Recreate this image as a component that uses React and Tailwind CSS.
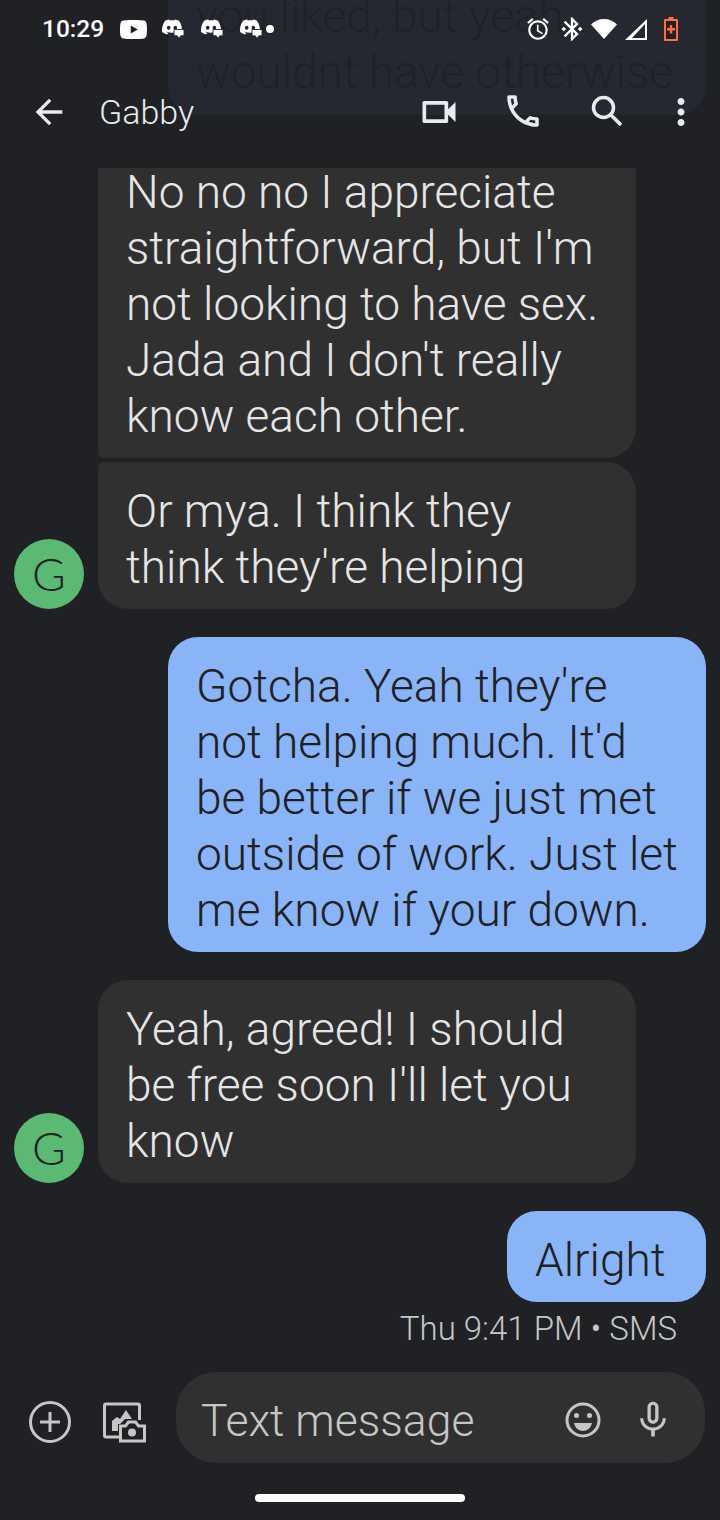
import { MdArrowBack, MdMoreVert, MdOutlineCall, MdOutlineVideocam, MdAlarm, MdBluetoothConnected, MdMicNone } from 'react-icons/md';
import { SiDiscord, SiYoutube } from 'react-icons/si';

const FONT = 'font-["Roboto",sans-serif]';

const DiscordBubble = () => (
    <div className="relative w-[24px] h-[20px]">
        <SiDiscord className="absolute left-[-1px] top-[-2px] w-[24px] h-[20px] text-white" />
        <svg viewBox="0 0 12 11" className="absolute left-[12px] top-[10px] w-[12px] h-[10px]">
            <path d="M0.5 0.5h11v7h-3.500l-2 3l-2-3h-3.500z" fill="#fff" stroke="#202124" strokeWidth="1" />
        </svg>
    </div>
);

const StatusBar = () => (
    <div className="relative flex items-center h-[58px] pl-[42px] pr-[42px]">
        <span className="text-[24.500px] font-medium text-white w-[78px]">10:29</span>
        <SiYoutube className="w-[27px] h-[27px] text-white mr-[14px]" />
        <div className="flex items-center gap-[15px]">
            <DiscordBubble />
            <DiscordBubble />
            <DiscordBubble />
        </div>
        <div className="w-[8px] h-[8px] rounded-full bg-white ml-[3px]" />
        <div className="flex items-center ml-auto">
            <MdAlarm className="w-[26px] h-[26px] text-white" />
            <MdBluetoothConnected className="ml-[7px] w-[28px] h-[28px] text-white" />
            <svg viewBox="0 0 26 20" className="ml-[5px] w-[26px] h-[20px]">
                <path d="M13 20L0 5.500C3.500 2 8 0 13 0s9.500 2 13 5.500z" fill="#fff" />
            </svg>
            <svg viewBox="0 0 22 22" className="ml-[8px] w-[22px] h-[22px]">
                <path d="M22 1v21H0zM20 6L7 20h13z" fill="#fff" fillRule="evenodd" />
            </svg>
            <svg viewBox="0 0 14 24" className="ml-[17px] w-[14px] h-[24px]">
                <path d="M4.500 0h5v2h3.500a1 1 0 0 1 1 1v20a1 1 0 0 1-1 1H1a1 1 0 0 1-1-1V3a1 1 0 0 1 1-1h3.500z" fill="#ff6e40" />
                <rect x="2" y="4" width="10" height="18" fill="#202124" />
                <path d="M5.800 8h2.400v3H11v2.400H8.200v3H5.800v-3H3V11h2.800z" fill="#ff6e40" />
            </svg>
        </div>
    </div>
);

const Toolbar = () => (
    <div className="relative flex items-center h-[54px] mt-[27px] pl-[29px] text-[#e8eaed]">
        <MdArrowBack className="w-[40px] h-[40px]" />
        <span className="ml-[30px] text-[34px] font-light text-[#e8eaed]">Gabby</span>
        <MdOutlineVideocam className="absolute left-[417px] top-[5px] w-[44px] h-[44px]" />
        <MdOutlineCall className="absolute left-[502px] top-[5px] w-[42px] h-[42px]" />
        <svg viewBox="0 0 36 36" className="absolute left-[589px] top-[9px] w-[36px] h-[36px]" fill="none" stroke="#e8eaed" strokeWidth="3.500">
            <circle cx="14.500" cy="13.500" r="10" />
            <path d="M22 21l10 10" />
        </svg>
        <MdMoreVert className="absolute left-[660px] top-[6px] w-[42px] h-[42px]" />
    </div>
);

const Avatar = () => (
    <div className='w-[70px] h-[70px] shrink-0 rounded-full bg-[#5bb974] flex items-center justify-center font-["Lato",sans-serif] text-[46px] font-light leading-none text-[#202124]'>
        G
    </div>
);

const Incoming = ({ lines, showAvatar, tight, clipped }) => (
    <div className="flex items-end shrink-0">
        <div className="w-[98px] pl-[14px] shrink-0">{showAvatar && <Avatar />}</div>
        <div className={`w-[538px] bg-[#303030] text-[#e5e5e5] pl-[28px] pb-[14px] pt-[21px] text-[46px] leading-[56px] font-[350] ${clipped ? 'rounded-br-[30px] rounded-bl-[6px]' : ''} ${tight ? 'rounded-tl-[6px] rounded-tr-[30px] rounded-br-[30px] rounded-bl-[30px]' : ''} ${!clipped && !tight ? 'rounded-[30px]' : ''}`}>
            {lines.map((line) => (
                <div key={line} className="whitespace-nowrap">{line}</div>
            ))}
        </div>
    </div>
);

const Outgoing = ({ lines, width }) => (
    <div className="flex justify-end pr-[14px] shrink-0">
        <div className={`${width} bg-[#8ab4f8] text-[#202124] rounded-[30px] pl-[28px] pb-[14px] pt-[21px] text-[46px] leading-[56px] font-[350]`}>
            {lines.map((line) => (
                <div key={line} className="whitespace-nowrap">{line}</div>
            ))}
        </div>
    </div>
);

const GalleryCamera = () => (
    <svg viewBox="0 0 44 44" className="w-[44px] h-[44px]" fill="none" stroke="#c4c7c5" strokeWidth="3">
        <path d="M17 38H4a1.500 1.500 0 0 1-1.500-1.500V6.500A1.500 1.500 0 0 1 4 5h32a1.500 1.500 0 0 1 1.500 1.500V21" />
        <path d="M10 32V22l5-4 3 2 6-9 6 9h-7l-5 5h-2v7z" fill="#c4c7c5" stroke="none" />
        <path d="M18.500 42V27h5l3-4h7l3 4h6v15z" fill="#202124" />
        <circle cx="30" cy="33.500" r="4" fill="#c4c7c5" stroke="none" />
    </svg>
);

const Smiley = () => (
    <svg viewBox="0 0 36 36" className="mt-[5px] w-[36px] h-[36px]" fill="none" stroke="#c4c7c5" strokeWidth="3">
        <circle cx="18" cy="18" r="16" />
        <circle cx="11.500" cy="13.500" r="2.500" fill="#c4c7c5" stroke="none" />
        <circle cx="24.500" cy="13.500" r="2.500" fill="#c4c7c5" stroke="none" />
        <path d="M9 21h18c-1 5-5 8-9 8s-8-3-9-8z" fill="#c4c7c5" stroke="none" />
    </svg>
);

const PlusCircle = () => (
    <svg viewBox="0 0 44 44" className="mt-[9px] w-[44px] h-[44px]" fill="none" stroke="#c4c7c5" strokeWidth="3">
        <circle cx="22" cy="22" r="19.500" />
        <path d="M22 12v20M12 22h20" />
    </svg>
);

const ComposeBar = () => (
    <div className="flex items-center h-[91px] pl-[28px] pr-[15px]">
        <PlusCircle />
        <div className="ml-[30px] mt-[6px]"><GalleryCamera /></div>
        <div className="ml-[30px] flex-1 h-[91px] rounded-[40px] bg-[#303030] flex items-center pl-[25px]">
            <span className="mt-[7px] text-[44.500px] font-[350] text-[#c4c7c5]">Text message</span>
            <div className="ml-auto flex items-center">
                <Smiley />
                <MdMicNone className="mt-[5px] ml-[30px] mr-[30px] w-[44px] h-[44px] text-[#c4c7c5]" />
            </div>
        </div>
    </div>
);

const App = () => {
    return (
        <div className={`relative w-[720px] h-[1520px] overflow-hidden bg-[#202124] flex flex-col ${FONT}`}>
            {/* scrolled bubble showing behind the status bar */}
            <div className="absolute left-[168px] top-[-60px] w-[538px] h-[175px] rounded-b-[30px] bg-[#252831] pl-[28px] pt-[48px] text-[46px] leading-[56px] font-[350] text-[#202124]">
                <div className="whitespace-nowrap">you liked, but yeah,</div>
                <div className="whitespace-nowrap">wouldnt have otherwise</div>
            </div>

            <div className="h-[168px] shrink-0 relative">
                <StatusBar />
                <Toolbar />
            </div>

            <div className="h-[1204px] shrink-0 overflow-hidden flex flex-col justify-end">
                <Incoming
                    clipped
                    lines={['No no no I appreciate', "straightforward, but I'm", 'not looking to have sex.', "Jada and I don't really", 'know each other.']}
                />
                <div className="mt-[4px] shrink-0">
                    <Incoming tight showAvatar lines={['Or mya. I think they', "think they're helping"]} />
                </div>
                <div className="mt-[28px] shrink-0">
                    <Outgoing
                        width="w-[538px]"
                        lines={["Gotcha. Yeah they're", "not helping much. It'd", 'be better if we just met', 'outside of work. Just let', 'me know if your down.']}
                    />
                </div>
                <div className="mt-[28px] shrink-0">
                    <Incoming showAvatar lines={['Yeah, agreed! I should', "be free soon I'll let you", 'know']} />
                </div>
                <div className="mt-[28px] shrink-0">
                    <Outgoing width="w-[199px]" lines={['Alright']} />
                </div>
                <div className="h-[70px] shrink-0 pr-[43px] pt-[8px] text-right text-[33px] leading-[38px] font-[350] text-[#c4c7c5]">
                    Thu 9:41 PM • SMS
                </div>
            </div>

            <ComposeBar />

            <div className="flex justify-center mt-[31px]">
                <div className="w-[210px] h-[8px] rounded-full bg-white" />
            </div>
        </div>
    );
};

export default App;
